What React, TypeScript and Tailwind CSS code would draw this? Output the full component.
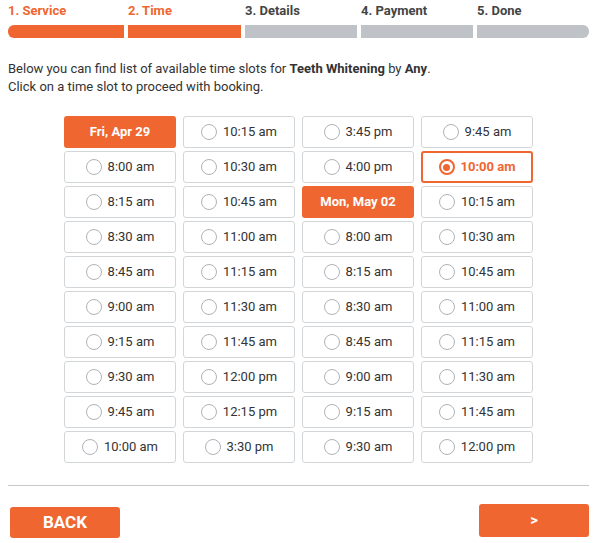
import React from "react";

type Slot = { label: string; kind?: "date" | "selected" };

const steps = [
  { label: "1. Service", width: "w-[116px]" },
  { label: "2. Time", width: "w-[113px]" },
  { label: "3. Details", width: "w-[112px]" },
  { label: "4. Payment", width: "w-[112px]" },
  { label: "5. Done", width: "w-[112px]" },
];

const columns: Slot[][] = [
  [
    { label: "Fri, Apr 29", kind: "date" },
    { label: "8:00 am" },
    { label: "8:15 am" },
    { label: "8:30 am" },
    { label: "8:45 am" },
    { label: "9:00 am" },
    { label: "9:15 am" },
    { label: "9:30 am" },
    { label: "9:45 am" },
    { label: "10:00 am" },
  ],
  [
    { label: "10:15 am" },
    { label: "10:30 am" },
    { label: "10:45 am" },
    { label: "11:00 am" },
    { label: "11:15 am" },
    { label: "11:30 am" },
    { label: "11:45 am" },
    { label: "12:00 pm" },
    { label: "12:15 pm" },
    { label: "3:30 pm" },
  ],
  [
    { label: "3:45 pm" },
    { label: "4:00 pm" },
    { label: "Mon, May 02", kind: "date" },
    { label: "8:00 am" },
    { label: "8:15 am" },
    { label: "8:30 am" },
    { label: "8:45 am" },
    { label: "9:00 am" },
    { label: "9:15 am" },
    { label: "9:30 am" },
  ],
  [
    { label: "9:45 am" },
    { label: "10:00 am", kind: "selected" },
    { label: "10:15 am" },
    { label: "10:30 am" },
    { label: "10:45 am" },
    { label: "11:00 am" },
    { label: "11:15 am" },
    { label: "11:30 am" },
    { label: "11:45 am" },
    { label: "12:00 pm" },
  ],
];

function SlotCell({ slot }: { slot: Slot }) {
  if (slot.kind === "date") {
    return (
      <div className="h-8 rounded-[3px] bg-[#ef6631] flex items-center justify-center text-white font-bold text-[13px]">
        {slot.label}
      </div>
    );
  }
  const selected = slot.kind === "selected";
  return (
    <button
      type="button"
      className={
        selected
          ? "h-8 rounded-[3px] border-2 border-[#ef6631] bg-white flex items-center justify-center gap-[6px] text-[#ef6631] font-bold text-[13px]"
          : "h-8 rounded-[3px] border border-[#d3d6d8] bg-white flex items-center justify-center gap-[6px] text-[#333] text-[13px]"
      }
    >
      {selected ? (
        <span className="w-4 h-4 rounded-full border-2 border-[#ef6631] flex items-center justify-center">
          <span className="w-[7px] h-[7px] rounded-full bg-[#ef6631]" />
        </span>
      ) : (
        <span className="w-4 h-4 rounded-full border-[1.5px] border-[#aeb3b8]" />
      )}
      <span>{slot.label}</span>
    </button>
  );
}

export default function App() {
  return (
    <div
      className="w-[600px] h-[543px] bg-white pl-2 pr-[11px] pt-[3px] text-[#333]"
      style={{ fontFamily: "Roboto, 'Liberation Sans', sans-serif" }}
    >
      <div className="flex gap-1">
        {steps.map((s, i) => (
          <div key={s.label} className={`${s.width} flex flex-col`}>
            <span
              className={
                i < 2
                  ? "text-[13px] font-bold text-[#ef6631] leading-[16px]"
                  : "text-[13px] font-bold text-[#444] leading-[16px]"
              }
            >
              {s.label}
            </span>
            <div
              className={[
                "mt-[6px] h-[13px]",
                i < 2 ? "bg-[#ef6631]" : "bg-[#bfc3c7]",
                i === 0 ? "rounded-l-md" : "",
                i === 4 ? "rounded-r-md" : "",
              ].join(" ")}
            />
          </div>
        ))}
      </div>

      <div className="mt-[22px] text-[13px] leading-[18px] text-[#333]">
        <p>
          Below you can find list of available time slots for{" "}
          <b>Teeth Whitening</b> by <b>Any</b>.
        </p>
        <p>Click on a time slot to proceed with booking.</p>
      </div>

      <div className="mt-[20px] flex justify-center">
        <div className="grid grid-cols-[repeat(4,112px)] gap-x-[7px]">
          {columns.map((col, ci) => (
            <div key={ci} className="flex flex-col gap-[3px]">
              {col.map((slot, si) => (
                <SlotCell key={si} slot={slot} />
              ))}
            </div>
          ))}
        </div>
      </div>

      <div className="mt-[22px] border-t border-[#c8c8c8]" />

      <div className="mt-[18px] flex justify-between items-start">
        <button
          type="button"
          className="mt-[3px] ml-[2px] w-[110px] h-[31px] rounded-[3px] bg-[#ef6631] text-white font-bold text-[17px]"
        >
          BACK
        </button>
        <button
          type="button"
          className="w-[110px] h-[33px] rounded-[3px] bg-[#ef6631] text-white font-bold text-[15px]"
        >
          &gt;
        </button>
      </div>
    </div>
  );
}
